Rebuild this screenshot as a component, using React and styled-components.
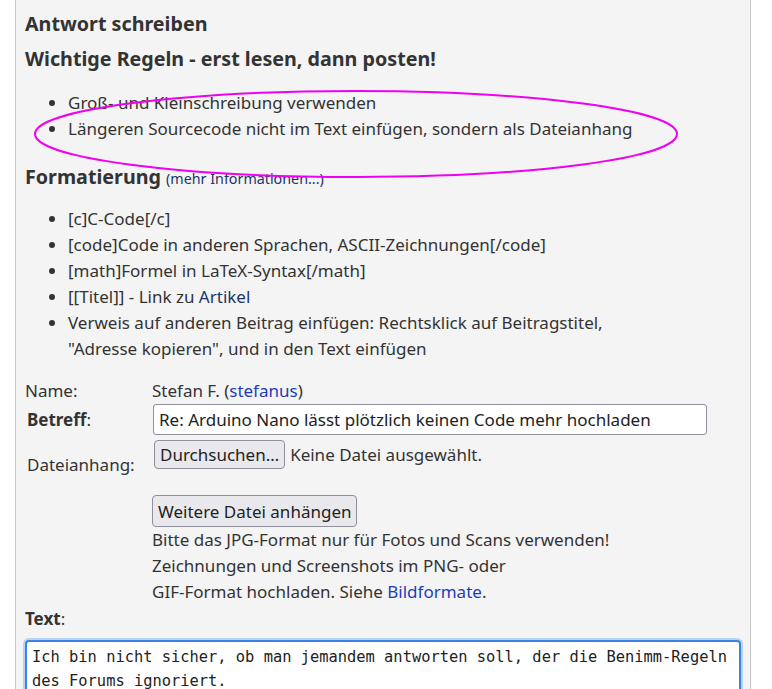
import styled, { createGlobalStyle } from "styled-components"

const Global = createGlobalStyle`
  body {
    margin: 0;
    background: #fff;
    font-family: "Noto Sans", "Open Sans", sans-serif;
    color: #333;
  }
`

const Panel = styled.div`
  box-sizing: border-box;
  width: 736px;
  min-height: 689px;
  margin-left: 15px;
  padding: 1px 9px 0;
  background: #f4f4f4;
  border: 1px solid #c6c6c6;
  border-top: none;
`

const Heading = styled.h3`
  margin: ${(p) => p.$top || 0}px 0 0;
  font-size: 19.7px;
  line-height: 27px;
  font-weight: 700;
  color: #333;
`

const Small = styled.a`
  font-size: 14.3px;
  font-weight: 400;
  color: #1b3568;
  text-decoration: none;
`

const Rules = styled.div`
  position: relative;
`

const List = styled.ul`
  margin: ${(p) => p.$top || 0}px 0 0;
  padding-left: 43px;
  font-size: 17px;
  line-height: 26px;
  list-style: disc;
`

const Link = styled.a`
  color: ${(p) => (p.$dark ? "#1b3568" : "#1d3db8")};
  text-decoration: none;
`

const Mark = styled.svg`
  position: absolute;
  left: 9px;
  top: 0;
  pointer-events: none;
  overflow: visible;
`

const Form = styled.div`
  display: grid;
  grid-template-columns: 127px 1fr;
  margin-top: 16px;
  font-size: 17px;
  line-height: 26px;
`

const Label = styled.div`
  padding-left: ${(p) => (p.$indent ? 2 : 0)}px;
  display: flex;
  align-items: ${(p) => (p.$center ? "center" : "flex-start")};
  padding-top: ${(p) => p.$pt || 0}px;
`

const Strong = styled.b`
  font-weight: 700;
`

const Field = styled.div`
  display: flex;
  flex-direction: column;
  align-items: flex-start;
  padding-top: ${(p) => p.$pt || 0}px;
  min-height: ${(p) => p.$h || 0}px;
`

const Input = styled.input`
  box-sizing: border-box;
  width: 554px;
  height: 31px;
  margin-left: 1px;
  padding: 0 5px;
  font: 17px "Noto Sans", sans-serif;
  color: #222;
  background: #fff;
  border: 1px solid #8f8f9d;
  border-radius: 3px;
`

const FileRow = styled.div`
  display: flex;
  align-items: center;
  gap: 5px;
  margin-left: 2px;
`

const Button = styled.button`
  box-sizing: border-box;
  height: ${(p) => p.$h || 29}px;
  padding: 0 5px;
  font: 17px "Noto Sans", sans-serif;
  color: #222;
  background: #e9e9ed;
  border: 1px solid #8f8f9d;
  border-radius: 4px;
`

const TextLabel = styled.div`
  margin-top: 1px;
  font-size: 17px;
  line-height: 26px;
`

const Area = styled.textarea`
  box-sizing: border-box;
  display: block;
  width: 716px;
  height: 120px;
  margin: 8px 0 0;
  padding: 4px 5px;
  font: 15.4px/23.5px "DejaVu Sans Mono", monospace;
  color: #222;
  background: #fff;
  border: 2px solid #3b82e8;
  border-radius: 4px;
  box-shadow: 0 0 0 2px #b9d3f5;
  outline: none;
  resize: none;
`

export default function App() {
  return (
    <>
      <Global />
      <Panel>
        <Heading $top={9}>Antwort schreiben</Heading>
        <Heading $top={8}>Wichtige Regeln - erst lesen, dann posten!</Heading>
        <Rules>
          <List $top={18}>
            <li>Groß- und Kleinschreibung verwenden</li>
            <li>Längeren Sourcecode nicht im Text einfügen, sondern als Dateianhang</li>
          </List>
          <Mark width="645" height="88" viewBox="0 0 645 88">
            <ellipse cx="322" cy="44" rx="321" ry="43" fill="none" stroke="#f000f0" strokeWidth="2" />
          </Mark>
        </Rules>
        <Heading $top={21}>
          Formatierung <Small href="#">(mehr Informationen...)</Small>
        </Heading>
        <List $top={14}>
          <li>[c]C-Code[/c]</li>
          <li>[code]Code in anderen Sprachen, ASCII-Zeichnungen[/code]</li>
          <li>[math]Formel in LaTeX-Syntax[/math]</li>
          <li>[[Titel]] - Link zu <Link $dark href="#">Artikel</Link></li>
          <li>
            Verweis auf anderen Beitrag einfügen: Rechtsklick auf Beitragstitel,
            <br />
            "Adresse kopieren", und in den Text einfügen
          </li>
        </List>
        <Form>
          <Label>Name:</Label>
          <Field>
            <span>
              Stefan F. (<Link href="#">stefanus</Link>)
            </span>
          </Field>
          <Label $indent $pt={3}>
            <span>
              <Strong>Betreff</Strong>:
            </span>
          </Label>
          <Field>
            <Input defaultValue="Re: Arduino Nano lässt plötzlich keinen Code mehr hochladen" />
          </Field>
          <Label $indent $center>
            Dateianhang:
          </Label>
          <Field $pt={5} $h={55}>
            <FileRow>
              <Button>Durchsuchen…</Button>
              <span>Keine Datei ausgewählt.</span>
            </FileRow>
          </Field>
          <div />
          <Field>
            <Button $h={32}>Weitere Datei anhängen</Button>
            <div>
              Bitte das JPG-Format nur für Fotos und Scans verwenden!
              <br />
              Zeichnungen und Screenshots im PNG- oder
              <br />
              GIF-Format hochladen. Siehe <Link href="#">Bildformate</Link>.
            </div>
          </Field>
        </Form>
        <TextLabel>
          <Strong>Text</Strong>:
        </TextLabel>
        <Area defaultValue={"Ich bin nicht sicher, ob man jemandem antworten soll, der die Benimm-Regeln des Forums ignoriert."} />
      </Panel>
    </>
  )
}
